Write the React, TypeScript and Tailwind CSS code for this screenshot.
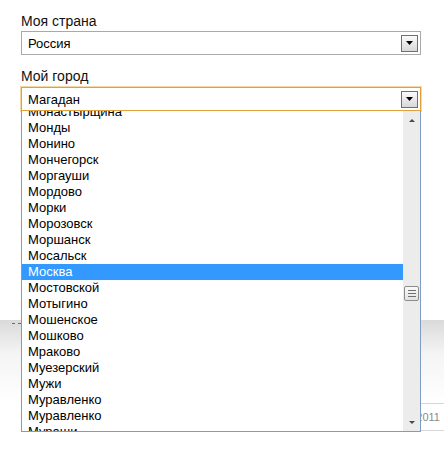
import React from 'react';

const cities = [
  'Монастырщина',
  'Монды',
  'Монино',
  'Мончегорск',
  'Моргауши',
  'Мордово',
  'Морки',
  'Морозовск',
  'Моршанск',
  'Мосальск',
  'Москва',
  'Мостовской',
  'Мотыгино',
  'Мошенское',
  'Мошково',
  'Мраково',
  'Муезерский',
  'Мужи',
  'Муравленко',
  'Муравленко',
  'Мураши',
];

const ArrowButton: React.FC = () => (
  <div className="flex h-[17px] w-[17px] items-center justify-center border border-[#6f6f6f] bg-gradient-to-b from-[#fbfbfb] to-[#d8d8d8]">
    <svg width="7" height="4" viewBox="0 0 7 4">
      <polygon points="0,0 7,0 3.5,4" fill="#000" />
    </svg>
  </div>
);

const SelectBox: React.FC<{ value: string; focused?: boolean }> = ({ value, focused }) => (
  <div
    className={
      focused
        ? 'flex h-[24px] w-[400px] items-center border border-[#e2a03a] bg-white pl-[6px] pr-[2px] shadow-[0_0_0_1px_#f4d8a4]'
        : 'flex h-[24px] w-[400px] items-center border border-[#a9a9a9] bg-white pl-[6px] pr-[2px]'
    }
  >
    <span className="flex-1 text-[13px] leading-[15px] text-black">{value}</span>
    <ArrowButton />
  </div>
);

const Scrollbar: React.FC = () => (
  <div className="flex w-[17px] flex-col items-center bg-[#ececec]">
    <svg className="mt-[8px]" width="6" height="3" viewBox="0 0 6 3">
      <polygon points="0,3 6,3 3,0" fill="#4a4a4a" />
    </svg>
    <div className="mt-[164px] flex h-[15px] w-[15px] flex-col items-center justify-center gap-[2px] rounded-[2px] border border-[#8c8c8c] bg-gradient-to-b from-[#f9f9f9] to-[#e2e2e2]">
      <div className="h-px w-[8px] bg-[#707070]" />
      <div className="h-px w-[8px] bg-[#707070]" />
      <div className="h-px w-[8px] bg-[#707070]" />
    </div>
    <svg className="mb-[7px] mt-auto" width="6" height="3" viewBox="0 0 6 3">
      <polygon points="0,0 6,0 3,3" fill="#4a4a4a" />
    </svg>
  </div>
);

const CityList: React.FC<{ selected: string }> = ({ selected }) => (
  <div className="absolute left-0 top-full z-10 flex h-[321px] w-[400px] border-x border-b border-[#7f9dc4] bg-white">
    <div className="flex-1 overflow-hidden">
      <div className="-mt-[7px]">
        {cities.map((city, i) => (
          <div
            key={i}
            className={
              city === selected
                ? 'h-[16px] bg-[#3399ff] pl-[6px] text-[13px] leading-[16px] text-white'
                : 'h-[16px] pl-[6px] text-[13px] leading-[16px] text-black'
            }
          >
            {city}
          </div>
        ))}
      </div>
    </div>
    <Scrollbar />
  </div>
);

export default function App() {
  return (
    <div className="h-[460px] w-[444px] overflow-hidden bg-white font-['Liberation_Sans',Arial,sans-serif]">
      {/* Form */}
      <div className="h-[320px] pl-[21px] pt-[13px]">
        <div className="mb-[2px] text-[14px] leading-[16px] text-[#111]">Моя страна</div>
        <SelectBox value="Россия" />

        <div className="mb-[3px] mt-[13px] text-[14px] leading-[16px] text-[#111]">Мой город</div>
        <div className="relative w-[400px]">
          <SelectBox value="Магадан" focused />
          <CityList selected="Москва" />
        </div>
      </div>

      {/* Bottom band */}
      <div className="h-[83px] bg-gradient-to-b from-[#dadada] via-[#f4f4f4] via-40% to-white pl-[12px] pt-[2px]">
        <span className="block h-[2px] w-[9px] border-b border-dashed border-[#3b6fe0]" />
      </div>

      {/* Footer */}
      <div className="ml-[200px] flex h-[28px] items-center justify-end border-y border-[#d6d6d6] pr-[4px] text-[11px] text-[#8a8a8a]">
        © 2011
      </div>
    </div>
  );
}
